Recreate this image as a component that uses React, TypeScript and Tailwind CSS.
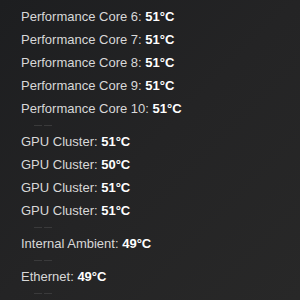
import React from 'react';

type Row = { label: string; value: string } | null;

const rows: Row[] = [
  { label: 'Performance Core 6', value: '51°C' },
  { label: 'Performance Core 7', value: '51°C' },
  { label: 'Performance Core 8', value: '51°C' },
  { label: 'Performance Core 9', value: '51°C' },
  { label: 'Performance Core 10', value: '51°C' },
  null,
  { label: 'GPU Cluster', value: '51°C' },
  { label: 'GPU Cluster', value: '50°C' },
  { label: 'GPU Cluster', value: '51°C' },
  { label: 'GPU Cluster', value: '51°C' },
  null,
  { label: 'Internal Ambient', value: '49°C' },
  null,
  { label: 'Ethernet', value: '49°C' },
  null,
];

const Separator = () => (
  <div className="h-[10px] flex items-center gap-[2px] pl-[34px]">
    <div className="w-[8px] h-px bg-[#3a3a3b]" />
    <div className="w-[8px] h-px bg-[#3a3a3b]" />
  </div>
);

const App = () => {
  return (
    <div
      className="w-[300px] h-[300px] overflow-hidden bg-gradient-to-br from-[#1d1e20] via-[#242425] to-[#282828] pt-[5px]"
      style={{ fontFamily: '"Liberation Sans", Arial, sans-serif' }}
    >
      {rows.map((row, i) =>
        row ? (
          <div key={i} className="h-[23px] flex items-center pl-[21px] text-[13px] text-[#d8d8d8] whitespace-nowrap">
            {row.label}:&nbsp;<span className="font-bold text-white">{row.value}</span>
          </div>
        ) : (
          <Separator key={i} />
        )
      )}
    </div>
  );
};

export default App;
